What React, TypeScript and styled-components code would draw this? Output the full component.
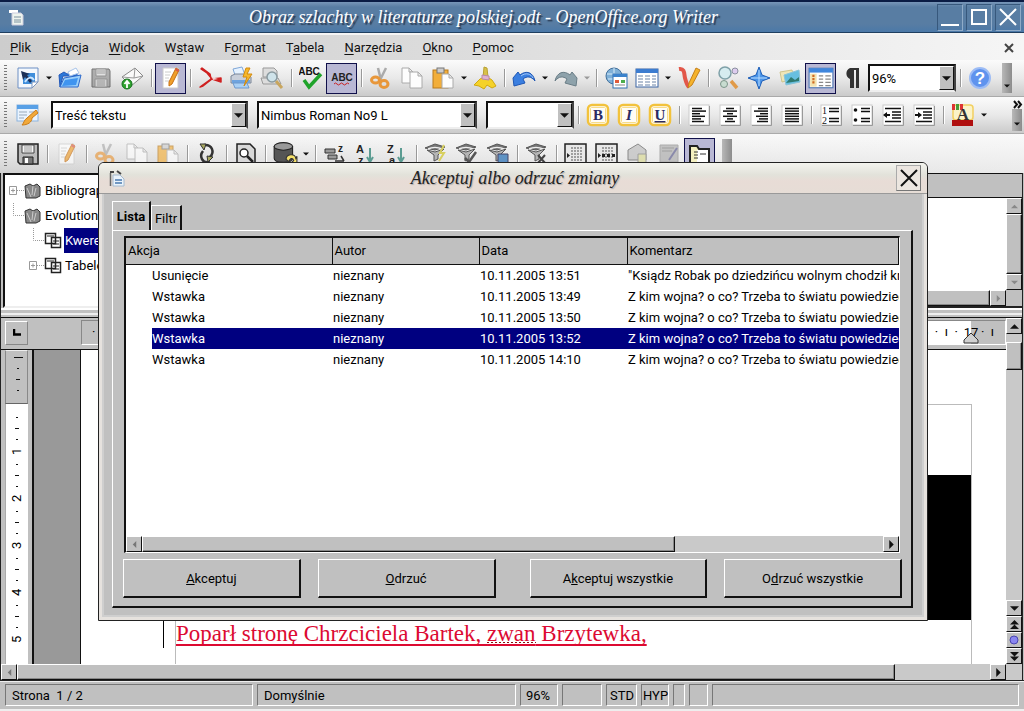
import React from "react";
import styled, { createGlobalStyle, css } from "styled-components";

const face = "#c0c0c0";
const ui = `Roboto, "Liberation Sans", sans-serif`;
const script = `"Liberation Serif", serif`;

const raised = css`
  border: 1px solid;
  border-color: #fff #111 #111 #fff;
`;

const Global = createGlobalStyle`
  * { box-sizing: border-box; }
  html, body { margin: 0; background: ${face}; }
  body { font-family: ${ui}; font-size: 13px; color: #000; overflow: hidden; }
  button, select { font: inherit; color: inherit; }
  svg { display: block; }
`;

const Window = styled.div`
  position: relative;
  display: flex;
  flex-direction: column;
  min-height: 100vh;
  background: ${face};
`;

/* ---------- title bar ---------- */
const TitleBar = styled.header`
  display: flex;
  align-items: center;
  height: 33px;
  padding: 0 3px 0 8px;
  border-top: 2px solid #0a1c44;
  border-bottom: 1px solid #1f3f60;
  background: linear-gradient(#7896b8 0, #587da3 5px, #587da3 22px, #4b79a8 100%);
`;
const WindowTitle = styled.h1`
  flex: 1;
  margin: 0;
  padding-left: 6px;
  text-align: center;
  font: italic 18px/30px ${script};
  color: #fff;
  text-shadow: 2px 2px 1px #2a3c55;
  white-space: nowrap;
`;
const WindowButtons = styled.div`
  display: flex;
  gap: 3px;
`;
const WindowButton = styled.button`
  display: grid;
  place-items: center;
  width: 26px;
  height: 27px;
  padding: 0;
  background: transparent;
  border: 1px solid;
  border-color: #37587c #8fabc8 #8fabc8 #37587c;
`;

/* ---------- menu ---------- */
const MenuBar = styled.nav`
  display: flex;
  align-items: center;
  gap: 20px;
  height: 27px;
  padding: 0 10px 0 10px;
  border-top: 2px solid #f4f4f4;
  background: linear-gradient(90deg, #cdcdcd, #dedede 50%, #f6f6f6);
`;
const MenuItem = styled.a`
  color: #111;
  text-decoration: none;
  line-height: 24px;
  u { text-underline-offset: 2px; }
`;
const CloseDoc = styled.button`
  margin-left: auto;
  padding: 0;
  border: 0;
  background: none;
`;

/* ---------- toolbars ---------- */
const Toolbar = styled.div<{ $last?: boolean }>`
  display: flex;
  align-items: center;
  height: ${(p) => (p.$last ? 39 : 37)}px;
  border-bottom: ${(p) => (p.$last ? 0 : 1)}px solid #aaa;
  background: ${(p) =>
    p.$last
      ? "linear-gradient(90deg, rgba(200,200,200,0) , rgba(250,250,250,.6)), linear-gradient(#f8f8f8, #d2d2d2)"
      : "linear-gradient(#fbfbfb, #e9e9e9 50%, #cbcbcb)"};
`;
const Grip = styled.span`
  width: 3px;
  height: 26px;
  margin: 0 5px 0 4px;
  background: repeating-linear-gradient(#777 0 1px, transparent 1px 3px);
`;
const Tool = styled.button<{ $on?: boolean; $dim?: boolean }>`
  display: grid;
  place-items: center;
  flex: none;
  width: 31px;
  height: 31px;
  padding: 0;
  border: ${(p) => (p.$on ? "1px solid #10104a" : "0")};
  background: ${(p) => (p.$on ? "#b9b8d4" : "transparent")};
  svg { opacity: ${(p) => (p.$dim ? 0.65 : 1)}; }
`;
const Drop = styled.button`
  display: grid;
  place-items: center;
  flex: none;
  width: 11px;
  height: 31px;
  padding: 0;
  border: 0;
  background: none;
`;
const Sep = styled.span`
  flex: none;
  width: 8px;
  height: 18px;
  background: linear-gradient(90deg, transparent 4px, #999 4px 5px, #fff 5px 6px, transparent 6px);
`;
const Combo = styled.span<{ $w: number; $gap: number }>`
  position: relative;
  flex: none;
  width: ${(p) => p.$w}px;
  height: 28px;
  margin-left: ${(p) => p.$gap}px;
  select {
    appearance: none;
    width: 100%;
    height: 100%;
    padding: 0 18px 0 2px;
    border: 2px solid;
    border-color: #111 #444 #eee #111;
    border-radius: 0;
    background: #fff;
  }
`;
const ComboArrow = styled.span`
  position: absolute;
  top: 2px;
  right: 2px;
  bottom: 2px;
  width: 15px;
  display: grid;
  place-items: center;
  pointer-events: none;
  background: ${face};
  ${raised}
`;
const Overflow = styled.button<{ $push?: boolean; $h?: number }>`
  display: flex;
  flex-direction: column;
  justify-content: flex-end;
  align-items: center;
  flex: none;
  width: 10px;
  height: ${(p) => p.$h ?? 30}px;
  margin-left: ${(p) => (p.$push ? "auto" : "7px")};
  margin-right: 2px;
  padding: 0 0 4px;
  border: 0;
  background: linear-gradient(90deg, #b8b8b8, #8c8c8c);
`;
const OverflowStack = styled.span`
  display: flex;
  flex-direction: column;
  align-items: center;
  margin-left: auto;
`;

/* ---------- data source browser ---------- */
const Frame = styled.main`
  display: flex;
  flex-direction: column;
  flex: 1;
  margin-right: 1px;
  border: solid #222;
  border-width: 0 1px;
`;
const Browser = styled.section`
  display: flex;
  height: 135px;
  padding-left: 2px;
`;
const Tree = styled.ul`
  width: 210px;
  margin: 0;
  padding: 3px 0 0 3px;
  list-style: none;
  background: #fff;
  border: 2px solid #111;
  border-bottom-color: #eee;
`;
const TreeRow = styled.li<{ $level: number; $selected?: boolean }>`
  display: flex;
  align-items: center;
  height: 25px;
  padding-left: ${(p) => p.$level * 20}px;
  span {
    margin-left: 2px;
    padding: 0 1px;
    line-height: 25px;
    ${(p) => p.$selected && "background:#000080;color:#fff;"}
  }
`;
const GridPane = styled.div`
  display: grid;
  flex: 1;
  grid-template: 24px 1fr 16px / 1fr 16px;
  border-top: 1px solid #111;
  border-bottom: 2px solid #222;
`;
const GridHead = styled.div`
  grid-column: 1 / 3;
  border-bottom: 1px solid #111;
`;
const GridBody = styled.div`
  background: #fff;
`;
const Splitter = styled.div`
  height: 10px;
  background: linear-gradient(#fff 2px, ${face} 2px 5px, #eee 5px 7px, ${face} 7px);
  border-bottom: 1px solid #111;
`;

/* ---------- scroll bars ---------- */
const Bar = styled.div<{ $v?: boolean }>`
  display: flex;
  flex-direction: ${(p) => (p.$v ? "column" : "row")};
  background: #c9c9c9;
  ${(p) => (p.$v ? "width:16px;" : "height:16px;")}
`;
const BarButton = styled.button`
  display: grid;
  place-items: center;
  flex: none;
  width: 16px;
  height: 16px;
  padding: 0;
  background: ${face};
  ${raised}
`;
const Thumb = styled.span<{ $size?: string }>`
  flex: ${(p) => (p.$size ? `0 0 ${p.$size}` : "1")};
  background: ${face};
  ${raised}
  box-shadow: inset -1px -1px 0 #888;
`;
const Track = styled.span<{ $size?: number }>`
  flex: ${(p) => (p.$size ? `0 0 ${p.$size}px` : "1")};
`;

/* ---------- editor ---------- */
const Editor = styled.section`
  display: flex;
  flex: 1;
`;
const EditorMain = styled.div`
  display: flex;
  flex-direction: column;
  flex: 1;
`;
const RulerRow = styled.div`
  display: flex;
  align-items: center;
  height: 32px;
  padding: 0 0 2px 4px;
  border-bottom: 1px solid #111;
`;
const TabKind = styled.button`
  display: grid;
  place-items: center;
  width: 23px;
  height: 24px;
  padding: 0;
  margin-right: 53px;
  background: ${face};
  border: 1px solid;
  border-color: #fff #888 #888 #fff;
`;
const Ruler = styled.div`
  display: flex;
  flex: 1;
  height: 25px;
  border: 1px solid;
  border-color: #888 #fff #fff #888;
`;
const RulerMargin = styled.span<{ $w: number }>`
  width: ${(p) => p.$w}px;
  padding: 2px 0 0 10px;
  line-height: 18px;
  white-space: pre;
`;
const RulerScale = styled.span`
  position: relative;
  flex: 1;
  padding-right: 10px;
  background: #fff;
  text-align: right;
  line-height: 22px;
  white-space: pre;
`;
const Indent = styled.span`
  position: absolute;
  right: -9px;
  bottom: 0;
`;
const DocRow = styled.div`
  display: flex;
  flex: 1;
`;
const VRuler = styled.div`
  flex: none;
  width: 33px;
  padding-left: 4px;
  border-right: 2px solid #111;
`;
const VMargin = styled.div`
  height: 54px;
  width: 23px;
  border: 1px solid;
  border-color: #eee #888 #666 #888;
`;
const VScale = styled.div`
  width: 23px;
  background: #fff;
  border-left: 1px solid #aaa;
`;
const Backdrop = styled.div`
  flex: none;
  width: 47px;
  background: #999;
  border-right: 1px solid #111;
`;
const Page = styled.div`
  flex: 1;
  padding: 54px 34px 0 94px;
  background: #fff;
`;
const PageBody = styled.div`
  height: 100%;
  padding-top: 70px;
  border: solid #bbb;
  border-width: 1px 1px 0;
`;
const Figure = styled.div`
  width: 50%;
  height: 145px;
  margin-left: auto;
  background: #000;
`;
const Paragraph = styled.p`
  position: relative;
  margin: 0;
  font: 23px/27px "Liberation Serif", serif;
  color: #dc0a32;
  white-space: nowrap;
  ins {
    text-decoration: underline 2px;
    text-underline-offset: 3px;
    text-decoration-skip-ink: none;
  }
  em {
    font-style: normal;
    background: repeating-linear-gradient(90deg, #8a1010 0 2px, transparent 2px 4px) 0 21px / 100% 1px no-repeat;
  }
  &::before {
    content: "";
    position: absolute;
    left: -13px;
    top: -6px;
    height: 34px;
    border-left: 1px solid #000;
  }
`;

/* ---------- status bar ---------- */
const StatusBar = styled.footer`
  display: flex;
  gap: 4px;
  height: 31px;
  padding: 3px 5px 3px 5px;
  border-top: 1px solid #222;
  border-bottom: 2px solid #eee;
  background: linear-gradient(#eee 1px, ${face} 1px);
`;
const StatusCell = styled.span<{ $w?: number; $pad?: number }>`
  flex: ${(p) => (p.$w ? `0 0 ${p.$w}px` : "1")};
  padding-left: ${(p) => p.$pad ?? 6}px;
  line-height: 22px;
  white-space: pre;
  overflow: hidden;
  border: 1px solid;
  border-color: #777 #fff #fff #777;
`;

/* ---------- dialog ---------- */
const Dialog = styled.div`
  position: absolute;
  top: 162px;
  left: 98px;
  right: 96px;
  background: ${face};
  border: 1px solid #222;
  border-radius: 6px 6px 0 0;
  box-shadow: inset 0 0 0 3px #e6e2de, inset 0 0 0 5px #cfcfcf;
`;
const DialogTitle = styled.div`
  display: flex;
  align-items: center;
  height: 31px;
  padding: 0 6px 0 9px;
  border-bottom: 1px solid #999;
  border-radius: 5px 5px 0 0;
  background: linear-gradient(#f4f4ee, #e2e2da 40%, #e8dcd6 60%, #e6ddd6);
  h2 {
    flex: 1;
    margin: 0;
    padding-left: 8px;
    text-align: center;
    font: italic 18px/30px ${script};
    color: #222;
    text-shadow: 1px 1px 1px #aaa;
  }
`;
const DialogClose = styled.button`
  display: grid;
  place-items: center;
  width: 25px;
  height: 26px;
  padding: 0;
  background: #ece6e0;
  border: 1px solid;
  border-color: #aaa #777 #777 #aaa;
`;
const DialogBody = styled.div`
  padding: 9px 14px 12px 13px;
`;
const Tabs = styled.div`
  display: flex;
  align-items: flex-end;
  height: 27px;
`;
const Tab = styled.button<{ $active?: boolean }>`
  height: ${(p) => (p.$active ? 29 : 25)}px;
  width: ${(p) => (p.$active ? 39 : 31)}px;
  padding: 0;
  border: solid;
  border-width: 1px 2px 0 1px;
  border-color: #fff #111 #fff #fff;
  background: ${face};
  font-weight: ${(p) => (p.$active ? 700 : 400)};
`;
const TabPanel = styled.div`
  padding: 5px 9px 8px 10px;
  border: solid;
  border-width: 1px 2px 2px 1px;
  border-color: #fff #111 #111 #fff;
`;
const List = styled.div`
  margin: 0 2px 6px 1px;
  border: solid;
  border-width: 2px 1px 1px 2px;
  border-color: #111 #fff #fff #111;
  background: #fff;
`;
const ListView = styled.div`
  height: 298px;
  overflow: hidden;
`;
const Changes = styled.table`
  width: 100%;
  table-layout: fixed;
  border-collapse: collapse;
  th, td { padding: 0 0 0 1px; text-align: left; white-space: nowrap; overflow: hidden; }
  th {
    height: 26px;
    padding-left: 2px;
    font-weight: 400;
    background: ${face};
    border-right: 1px solid #111;
    border-bottom: 1px solid #111;
  }
  td { height: 21px; line-height: 21px; }
  td:first-child { padding-left: 26px; }
`;
const ChangeRow = styled.tr<{ $selected?: boolean }>`
  ${(p) =>
    p.$selected &&
    css`
      color: #fff;
      td { background: #000080; }
      td:first-child { background: linear-gradient(90deg, #fff 26px, #000080 26px); }
    `}
`;
const Actions = styled.div`
  display: flex;
  gap: 34px;
`;
const ActionPair = styled.div`
  display: flex;
  flex: 1;
  gap: 17px;
`;
const Action = styled.button`
  flex: 1;
  height: 39px;
  padding: 0;
  background: ${face};
  border: solid;
  border-width: 1px 2px 2px 1px;
  border-color: #fff #111 #111 #fff;
`;

/* ---------- drawings ---------- */
const Arrow = ({ d = "down", c = "#111", s = 7 }: { d?: string; c?: string; s?: number }) => {
  const p: Record<string, string> = {
    down: "M0 2h8L4 6z",
    up: "M0 6h8L4 2z",
    left: "M6 0v8L2 4z",
    right: "M2 0v8l4-4z",
    up2: "M0 4h8L4 0zM0 8h8L4 4z",
    down2: "M0 0h8L4 4zM0 4h8L4 8z",
  };
  return (
    <svg width={s} height={s} viewBox="0 0 8 8"><path d={p[d]} fill={c} /></svg>
  );
};

const Svg = ({ children, w = 24, h = 24 }: { children: React.ReactNode; w?: number; h?: number }) => (
  <svg width={w} height={h} viewBox="0 0 24 24" fill="none">{children}</svg>
);

const sheet = (x: number, y: number, w = 11, h = 15, fill = "#fdfdfd") => (
  <path d={`M${x} ${y}h${w - 4}l4 4v${h - 4}h-${w}zM${x + w - 4} ${y}v4h4`} fill={fill} stroke="#aaa" />
);
const lens = (x: number, y: number, c = "#d89a50") => (
  <>
    <path d={`M${x + 4} ${y + 4}l6 7`} stroke={c} strokeWidth="3" />
    <circle cx={x} cy={y} r="5" fill="#cfe3ea" stroke="#8a9aa0" strokeWidth="1.5" />
  </>
);
const funnel = (extra?: React.ReactNode) => (
  <Svg>
    <path d="M1 6l10-4 10 3-10 3z" fill="#777" stroke="#555" />
    <path d="M4 7c4-2 10-2 14 0" stroke="#eee" strokeWidth="1.5" />
    <path d="M3 8l7 5v6l4-2v-4l6-6-9 3z" fill="#b5b5b5" stroke="#555" />
    {extra}
  </Svg>
);
const lines = (xs: number[][]) => (
  <Svg>
    <rect x="2" y="2" width="20" height="20" fill="#fff" stroke="#ccc" />
    <path d="M22.500 3v19.500H3" stroke="#999" />
    {xs.map(([a, b], i) => (
      <path key={i} d={`M${a} ${5.5 + i * 2.6}H${b}`} stroke="#111" strokeWidth="1.5" />
    ))}
  </Svg>
);
const letterBox = (t: string, st: React.CSSProperties) => (
  <Svg>
    <rect x="2" y="2" width="20" height="20" rx="4" fill="#fff" stroke="#f2c23c" strokeWidth="2.500" />
    <rect x="4.500" y="4.500" width="15" height="15" rx="1" fill="#fffdf6" stroke="#f7dc8a" />
    <text x="12" y="17" textAnchor="middle" fontFamily="Liberation Serif" fontSize="15" fontWeight="700" fill="#2a2a62" style={st}>{t}</text>
  </Svg>
);
const sortIcon = (a: string, b: string) => (
  <Svg>
    <text x="2" y="11" fontFamily={"Liberation Sans"} fontWeight="700" fontSize="11" fill="#222">{a}</text>
    <text x="4" y="22" fontFamily={"Liberation Sans"} fontWeight="700" fontSize="11" fill="#222">{b}</text>
    <path d="M16 6v13M13 15l3 5 3-5" stroke="#5b9c92" strokeWidth="2" />
  </Svg>
);
const bookRows = (mark: React.ReactNode) => (
  <Svg>
    <rect x="1" y="2" width="21" height="20" fill="#e8e8e8" stroke="#222" strokeWidth="1.500" />
    <path d="M7 6h12M7 9h12M7 12h12M7 15h12M7 18h12" stroke="#555" strokeDasharray="2 1" />
    {mark}
  </Svg>
);

const icons = {
  newDoc: (
    <Svg>
      <path d="M2 2h20v14l-6 6H2z" fill="#f4f8fd" stroke="#6d8fc4" />
      <path d="M7 7h12v11H7z" fill="#3f8edb" />
      <path d="M5 5l9 3-3 1 5 6-2 2-5-6-2 3z" fill="#1b2f58" />
      <path d="M9 16c4-6 7-5 9-2" stroke="#cde6ff" strokeWidth="2" />
      <path d="M22 16h-6v6z" fill="#fff" stroke="#7d96bd" />
    </Svg>
  ),
  open: (
    <Svg>
      <path d="M1 9l5-3 3 2 10-1v3H5l-3 11z" fill="#2c78d8" stroke="#2459b8" />
      <path d="M10 6l8-4 3 5-9 3z" fill="#fff" stroke="#a8c4ea" />
      <path d="M6 12l17-3-3 12H2z" fill="#9bd0fb" stroke="#2a68cc" />
      <path d="M4 20l3-6 13-2-2 7z" fill="#3f94f0" />
    </Svg>
  ),
  save: (
    <Svg>
      <path d="M3 3h17l1 2v16H3z" fill="#8c8c8c" stroke="#333" />
      <path d="M7 3h10v7H7z" fill="#ddd" stroke="#666" />
      <path d="M6 13h12v8H6z" fill="#c8c8c8" stroke="#666" />
      <path d="M8 15h8M8 17h8M8 19h8M8 5h8M8 7h8" stroke="#777" />
    </Svg>
  ),
  mail: (
    <Svg>
      <path d="M2 11L15 2l8 8-12 10z" fill="#fafafa" stroke="#888" />
      <path d="M2 11l12 1 1-10M14 12l9-2" stroke="#999" fill="none" />
      <circle cx="7" cy="18" r="5" fill="#2fa32f" stroke="#12701a" />
      <path d="M7 22v-6M4.500 18L7 15l2.500 3" stroke="#fff" strokeWidth="1.800" />
    </Svg>
  ),
  edit: (
    <Svg>
      <path d="M4 2h15v20H4z" fill="#fff" stroke="#ccc" />
      <path d="M6 6h6M6 9h5M6 12h4M6 15h4" stroke="#ccc" />
      <path d="M17 2l3 2-7 14-3 2v-4z" fill="#f0a02c" stroke="#c76f12" />
      <path d="M17 2l3 2-1 2-3-2z" fill="#d8584a" />
    </Svg>
  ),
  pdf: (
    <Svg>
      <path d="M4 2l8 6 1 5-11 8 3-1 9-7 9-1v4l-9-3-5-6-6-4z" fill="#cf2020" stroke="#cf2020" strokeWidth="1.500" strokeLinejoin="round" />
      <path d="M14 11l6 2-5 1z" fill="#f3d0d0" />
    </Svg>
  ),
  print: (
    <Svg>
      <path d="M4 3l9-2 3 8H6z" fill="#e6f2ff" stroke="#7fa7d8" />
      <path d="M2 10l4-2h13l3 3v6H2z" fill="#c9cfda" stroke="#7b8698" />
      <path d="M3 14h18v3H3z" fill="#6ea4e0" />
      <path d="M4 17h14l2 5H6z" fill="#a9d0f5" stroke="#6d98cc" />
      <path d="M17 2l-3 9h4l-3 9 8-12h-5l3-6z" fill="#f7b82a" stroke="#d28a10" />
    </Svg>
  ),
  preview: (
    <Svg>
      <path d="M3 2h11l3 3v6H3zM1 12h17l3 6H3z" fill="#ddd" stroke="#999" />
      {lens(12, 11, "#c9a65e")}
    </Svg>
  ),
  spell: (
    <Svg>
      <text x="10" y="9" textAnchor="middle" fontFamily="Liberation Sans" fontWeight="700" fontSize="10" fill="#111">ABC</text>
      <path d="M5 14l5 7L22 8" stroke="#1fa32a" strokeWidth="3.500" />
    </Svg>
  ),
  autospell: (
    <Svg>
      <text x="12" y="15" textAnchor="middle" fontFamily="Liberation Sans" fontWeight="700" fontSize="10" fill="#222">ABC</text>
      <path d="M4 18q1.500-2 3 0t3 0 3 0 3 0 3 0" stroke="#c22" />
    </Svg>
  ),
  cut: (
    <Svg>
      <path d="M9 2l3 12M17 2l-6 12" stroke="#aaa" strokeWidth="2.500" />
      <ellipse cx="6.500" cy="14" rx="4" ry="3" stroke="#e8973a" strokeWidth="3" />
      <ellipse cx="15" cy="18" rx="4" ry="3.500" stroke="#e8973a" strokeWidth="3" />
    </Svg>
  ),
  copy: <Svg>{sheet(2, 2, 11, 15)}{sheet(10, 6, 12, 16)}</Svg>,
  paste: (
    <Svg>
      <rect x="2" y="4" width="15" height="18" fill="#f2ae3a" stroke="#b97a1c" />
      <rect x="6" y="2" width="7" height="5" fill="#ccc" stroke="#777" />
      {sheet(11, 8, 11, 14)}
    </Svg>
  ),
  brush: (
    <Svg>
      <path d="M11 1l3 1 1 9-5 1z" fill="#d8c04a" stroke="#b9a232" />
      <path d="M7 13l6-3 6 4 4 6-4 2-5-3-3 4-5-3-5-1z" fill="#f5d22a" stroke="#d0a810" />
      <path d="M9 9l7 1v4l-7-1z" fill="#dfb3cf" stroke="#b98aa8" />
    </Svg>
  ),
  undo: (
    <Svg>
      <path d="M1 12l5-6 2 3c6-5 13-3 15 6-4-5-8-5-12-2l2 4-11 3z" fill="#3b7fe0" stroke="#1f57b4" />
      <path d="M9 10c5-4 10-2 12 2" stroke="#a5c8f6" />
    </Svg>
  ),
  redo: (
    <Svg>
      <path d="M23 12l-5-6-2 3C10 4 3 6 1 15c4-5 8-5 12-2l-2 4 11 3z" fill="#8ea2ab" stroke="#6a7d86" />
    </Svg>
  ),
  link: (
    <Svg>
      <circle cx="10" cy="10" r="8" fill="#7fb0d8" stroke="#44719c" />
      <path d="M3 8h14M4 13h12M10 2v16" stroke="#d9edfa" />
      <rect x="9" y="8" width="14" height="14" fill="#fff" stroke="#2f6fb0" />
      <path d="M9 8h14v3H9z" fill="#3b82cc" />
      <path d="M11 14h4v3h-4z" fill="#e05a3a" /><path d="M17 14h4v3h-4z" fill="#4cae4c" />
      <path d="M11 19h10" stroke="#888" />
    </Svg>
  ),
  table: (
    <Svg>
      <rect x="1" y="3" width="22" height="18" fill="#fff" stroke="#3b64a4" />
      <path d="M1 3h22v4H1z" fill="#3c7cd0" />
      <path d="M3 10h5M10 10h5M17 10h4M3 13h5M10 13h5M17 13h4M3 16h5M10 16h5M17 16h4M3 19h5M10 19h5M17 19h4" stroke="#6b83a6" />
    </Svg>
  ),
  draw: (
    <Svg>
      <path d="M2 3c6-1 5 5 6 9s2 7 4 9" stroke="#e2574a" strokeWidth="4" />
      <path d="M19 2l4 2-8 15-4 3 1-5z" fill="#f5b32c" stroke="#c5801a" />
    </Svg>
  ),
  find: (
    <Svg>
      <path d="M15 15l6 7" stroke="#e09a48" strokeWidth="3.500" />
      <circle cx="9" cy="7" r="6" fill="#d6ecf0" stroke="#7fa1a8" strokeWidth="1.500" />
      <circle cx="19" cy="5" r="3" fill="#dce" stroke="#8a90a0" />
      <circle cx="8" cy="18" r="3.500" fill="#c8dcd0" stroke="#7c958a" />
    </Svg>
  ),
  nav: (
    <Svg>
      <path d="M12 1l3 8 8 3-8 3-3 8-3-8-8-3 8-3z" fill="#4a94e8" stroke="#1f5fb8" />
      <path d="M12 4v16M4 12h16" stroke="#b8dcff" />
    </Svg>
  ),
  gallery: (
    <Svg>
      <path d="M2 6l12-2 2 9-12 3z" fill="#efe6b8" stroke="#d0c58c" />
      <path d="M6 9l15-5 1 12-14 3z" fill="#67bfe0" stroke="#8cc4d8" />
      <path d="M8 17l5-6 4 3 4-3v4z" fill="#2f7a70" />
    </Svg>
  ),
  sources: (
    <Svg w={26} h={26}>
      <rect x="1" y="3" width="22" height="18" fill="#fff" stroke="#4a74b0" />
      <path d="M1 3h22v4H1z" fill="#3f86dc" />
      <path d="M2 8h6v12H2z" fill="#f3e3b0" />
      <path d="M4 10h2M4 13h2M4 16h2" stroke="#d06a20" strokeWidth="2" />
      <path d="M10 10h4M16 10h5M10 13h4M16 13h5M10 16h4M16 16h5M10 19h4M16 19h5" stroke="#888" />
    </Svg>
  ),
  para: (
    <Svg>
      <path d="M10 13a6 6 0 010-11h9v20h-3V4h-2v18h-4z" fill="#333" />
    </Svg>
  ),
  help: (
    <Svg>
      <circle cx="12" cy="12" r="10" fill="#5f93ee" stroke="#9dbcf5" strokeWidth="2" />
      <text x="12" y="18" textAnchor="middle" fontFamily="Liberation Sans" fontWeight="700" fontSize="17" fill="#fff">?</text>
    </Svg>
  ),
  styles: (
    <Svg>
      <rect x="1" y="2" width="21" height="16" fill="#eaf4ff" stroke="#8cb3dd" />
      <path d="M1 2h21v4H1z" fill="#58a0e6" />
      <path d="M3 9h8M3 12h8M3 15h5M13 9h7" stroke="#9ab" />
      <path d="M20 7l2 3-6 5c0 4-4 7-10 7 2-2 2-5 5-7z" fill="#f2a93a" stroke="#cb7c18" />
    </Svg>
  ),
  left: lines([[5, 15], [5, 19], [5, 13], [5, 18], [5, 14], [5, 17]]),
  center: lines([[8, 16], [5, 19], [9, 15], [5, 19], [9, 15], [7, 17]]),
  right: lines([[9, 19], [5, 19], [11, 19], [7, 19], [10, 19], [8, 19]]),
  justify: lines([[5, 19], [5, 19], [5, 19], [5, 19], [5, 19], [5, 19]]),
  numbers: (
    <Svg>
      <rect x="2" y="2" width="20" height="20" fill="#fff" stroke="#ccc" />
      <path d="M22.500 3v19.500H3" stroke="#999" />
      <text x="3" y="11" fontFamily="Liberation Serif" fontSize="10" fill="#111">1</text>
      <text x="3" y="21" fontFamily="Liberation Serif" fontSize="10" fill="#111">2</text>
      <path d="M10 5.500h10M10 8.500h10M10 15.500h10M10 18.500h10" stroke="#111" strokeWidth="1.500" />
    </Svg>
  ),
  bullets: (
    <Svg>
      <rect x="2" y="2" width="20" height="20" fill="#fff" stroke="#ccc" />
      <path d="M22.500 3v19.500H3" stroke="#999" />
      <circle cx="5.500" cy="7" r="1.800" fill="#111" /><circle cx="5.500" cy="17" r="1.800" fill="#111" />
      <path d="M11 5.500h9M11 8.500h9M11 15.500h9M11 18.500h9" stroke="#111" strokeWidth="1.500" />
    </Svg>
  ),
  outdent: (
    <Svg>
      <rect x="2" y="2" width="20" height="20" fill="#fff" stroke="#ccc" />
      <path d="M22.500 3v19.500H3" stroke="#999" />
      <path d="M4 5.500h16M11 9h9M11 12h9M11 15h9M4 18.500h16" stroke="#111" strokeWidth="1.500" />
      <path d="M2 12l4-3v2h3v2H6v2z" fill="#111" />
    </Svg>
  ),
  indent: (
    <Svg>
      <rect x="2" y="2" width="20" height="20" fill="#fff" stroke="#ccc" />
      <path d="M22.500 3v19.500H3" stroke="#999" />
      <path d="M4 5.500h16M11 9h9M11 12h9M11 15h9M4 18.500h16" stroke="#111" strokeWidth="1.500" />
      <path d="M10 12L6 9v2H3v2h3v2z" fill="#111" />
    </Svg>
  ),
  fontColor: (
    <Svg>
      <rect x="2" y="2" width="20" height="15" rx="3" fill="#fbf3c8" stroke="#f2d060" strokeWidth="1.500" />
      <path d="M1 1h3v6H1zM9 1h3v6H9z" fill="#d33" /><path d="M5 1h3v6H5z" fill="#4a9a3a" />
      <text x="12" y="17" textAnchor="middle" fontFamily="Liberation Serif" fontWeight="700" fontSize="17" fill="#333">A</text>
      <path d="M1 17h21v6H1z" fill="#b01010" />
    </Svg>
  ),
  floppy: (
    <Svg>
      <path d="M2 2h20v20H4l-2-2z" fill="#bbb" stroke="#222" strokeWidth="1.500" />
      <path d="M6 3h12v8H6z" fill="#f4f4f4" stroke="#444" /><path d="M8 5h8M8 7h8M8 9h8" stroke="#999" />
      <path d="M7 15h10v7H7z" fill="#777" stroke="#222" /><path d="M9 16h3v5H9z" fill="#fff" />
    </Svg>
  ),
  refresh: (
    <Svg>
      <path d="M9 3c8-1 11 7 6 12M15 20C7 22 4 14 8 9" stroke="#333" strokeWidth="2.500" />
      <path d="M5 2l6 0-2 6zM12 14l6 1-5 5z" fill="#a8a860" stroke="#333" />
    </Svg>
  ),
  findRec: (
    <Svg>
      <path d="M3 2h13l5 5v15H3z" fill="#d8d8d8" stroke="#222" strokeWidth="1.500" />
      <circle cx="10" cy="11" r="4" fill="#fff" stroke="#222" strokeWidth="1.500" />
      <path d="M13 14l6 6" stroke="#222" strokeWidth="2.500" />
    </Svg>
  ),
  dbRefresh: (
    <Svg w={26} h={26}>
      <path d="M2 5v11c0 5 17 5 17 0V5z" fill="#555" stroke="#222" />
      <ellipse cx="10.500" cy="5" rx="8.500" ry="3.500" fill="#999" stroke="#222" />
      <path d="M13 17c0-5 8-6 9-1l1-2v6h-5l2-2c-1-3-4-2-4 1z" fill="#f4e06a" stroke="#333" />
    </Svg>
  ),
  sort: (
    <Svg>
      <path d="M2 7h10v4H2zM5 13h9v4H5z" fill="#999" stroke="#333" />
      <text x="15" y="10" fontFamily="Liberation Sans" fontWeight="700" fontSize="10" fill="#222">z</text>
      <path d="M12 19h9M18 14l3 5" stroke="#333" strokeWidth="1.500" />
    </Svg>
  ),
  sortAsc: sortIcon("A", "z"),
  sortDesc: sortIcon("Z", "a"),
  autofilter: funnel(<path d="M20 3l-4 8h4l-5 8" stroke="#d8d060" strokeWidth="2" />),
  applyFilter: funnel(<path d="M10 16l4 4 7-10" stroke="#555" strokeWidth="2.500" />),
  stdFilter: funnel(<path d="M12 12h10v9H12z" fill="#5f93c4" stroke="#446" />),
  noFilter: funnel(<path d="M13 13l7 8M20 13l-7 8" stroke="#444" strokeWidth="2" />),
  toText: bookRows(<path d="M3 11l3 2.500-3 2.500z" fill="#222" />),
  toFields: bookRows(<path d="M3 11l3 2.500-3 2.500zM7 12h3v3H7zM12 12h3v3h-3zM17 12h3v3h-3z" fill="#222" />),
  mailMerge: (
    <Svg>
      <path d="M2 8l10-6 8 6v10H2z" fill="#bbb" stroke="#555" /><path d="M12 12h8v9h-8z" fill="#d8d890" stroke="#777" />
    </Svg>
  ),
  docData: (
    <Svg>
      <path d="M3 3h18v17H3z" fill="#aaa" stroke="#888" /><path d="M5 6h12M5 9h10" stroke="#777" /><path d="M20 6l-8 12" stroke="#558" strokeWidth="2" />
    </Svg>
  ),
  explorer: (
    <Svg>
      <path d="M2 4h7l2 3h10v16H2z" fill="#f4f0c0" stroke="#222" strokeWidth="2" />
      <path d="M9 8h11v14H9z" fill="#fff" /><path d="M6 10h4M6 13h4M6 16h4M12 12h6" stroke="#333" />
    </Svg>
  ),
  appDoc: (
    <svg width="16" height="18" viewBox="0 0 16 18">
      <path d="M1 2h9v3H1z" fill="#fff" /><path d="M4 5h9l2 2v10H4z" fill="#eef4ee" stroke="#ccd" /><path d="M6 9h7M6 12h7M6 14h7" stroke="#7d92a0" />
    </svg>
  ),
  dialogDoc: (
    <svg width="18" height="19" viewBox="0 0 18 19" fill="none">
      <path d="M2.500 4v13" stroke="#666" strokeWidth="1.500" /><path d="M2 3h4M9 2l4 3" stroke="#444" strokeWidth="2" /><path d="M5 6h7l4 4v7H5z" fill="#eaf3fb" stroke="#a5bacf" /><path d="M7 11h7M7 14h7" stroke="#4a7ab0" strokeWidth="1.500" />
    </svg>
  ),
};
type IconName = keyof typeof icons;

const T = ({ i, label, on, dim }: { i: IconName; label: string; on?: boolean; dim?: boolean }) => (
  <Tool $on={on} $dim={dim} aria-label={label} aria-pressed={on}>{icons[i]}</Tool>
);
const D = ({ c }: { c?: string }) => <Drop aria-label="Więcej"><Arrow c={c} s={6} /></Drop>;
const Select = ({ label, value, w, gap }: { label: string; value: string; w: number; gap: number }) => (
  <Combo $w={w} $gap={gap}>
    <select aria-label={label} defaultValue={value}><option>{value}</option></select>
    <ComboArrow><Arrow s={9} /></ComboArrow>
  </Combo>
);

const menus: [string, string, string][] = [
  ["", "P", "lik"], ["", "E", "dycja"], ["", "W", "idok"], ["W", "s", "taw"], ["F", "o", "rmat"],
  ["T", "a", "bela"], ["", "N", "arzędzia"], ["", "O", "kno"], ["", "P", "omoc"],
];
const quote = "Z kim wojna? o co? Trzeba to światu powiedzieć";
const changes = [
  ["Usunięcie", "10.11.2005 13:51", "\"Ksiądz Robak po dziedzińcu wolnym chodził krokiem"],
  ["Wstawka", "10.11.2005 13:49", quote],
  ["Wstawka", "10.11.2005 13:50", quote],
  ["Wstawka", "10.11.2005 13:52", quote],
  ["Wstawka", "10.11.2005 14:10", quote],
];

const Plus = ({ faded }: { faded?: boolean }) => (
  <svg width="16" height="25" viewBox="0 0 16 25" fill="none" stroke="#999">
    {!faded && <path d="M1.500 8.500h7v8h-7zM3 12.500h4M5 10.500v4" />}
    <path d={faded ? "M5.500 0v12.500H16" : "M9 12.500h7"} strokeDasharray="1 1" />
  </svg>
);
const Book = () => (
  <svg width="18" height="16" viewBox="0 0 18 16">
    <path d="M1 3l5-2 3 2 4-2 3 3v9l-4 2H2z" fill="#888" stroke="#333" />
    <path d="M3 5l4 9M9 3l-1 9M12 5l-2 8" stroke="#ccc" />
  </svg>
);
const Sheets = () => (
  <svg width="18" height="17" viewBox="0 0 18 17" fill="#fff" stroke="#222">
    <path d="M1.500 1.500h10v10h-10zM7.500 5.500h9v10h-9z" strokeWidth="1.500" /><path d="M3 4h7M9 9h6M9 12h6" />
  </svg>
);

const VRulerMarks = () => (
  <svg width="22" height="260" viewBox="0 0 22 260">
    {[1, 2, 3, 4, 5].map((n) => (
      <g key={n}>
        <text transform={`translate(15 ${n * 47 + 4}) rotate(-90)`} fontFamily="Roboto" fontSize="13">{n}</text>
        {[-34, -23, -12].map((o) => (
          <path key={o} d={`M${o === -23 ? 9 : 10} ${n * 47 + o}.500h${o === -23 ? 4 : 2}`} stroke="#111" />
        ))}
      </g>
    ))}
  </svg>
);

export default function App() {
  return (
    <Window>
      <Global />
      <TitleBar>
        {icons.appDoc}
        <WindowTitle>Obraz szlachty w literaturze polskiej.odt - OpenOffice.org Writer</WindowTitle>
        <WindowButtons>
          <WindowButton aria-label="Minimalizuj"><svg width="20" height="20"><path d="M1 18h18" stroke="#fff" strokeWidth="2" /></svg></WindowButton>
          <WindowButton aria-label="Maksymalizuj"><svg width="20" height="20"><path d="M3 3h14v14H3z" stroke="#fff" strokeWidth="2" fill="none" /></svg></WindowButton>
          <WindowButton aria-label="Zamknij"><svg width="20" height="20"><path d="M2 2l16 16M18 2L2 18" stroke="#fff" strokeWidth="2" /></svg></WindowButton>
        </WindowButtons>
      </TitleBar>

      <MenuBar>
        {menus.map(([a, k, b]) => (
          <MenuItem key={a + k + b} href="#">{a}<u>{k}</u>{b}</MenuItem>
        ))}
        <CloseDoc aria-label="Zamknij dokument"><svg width="10" height="10"><path d="M1 1l8 8M9 1L1 9" stroke="#444" strokeWidth="2" /></svg></CloseDoc>
      </MenuBar>

      <Toolbar>
        <Grip />
        <T i="newDoc" label="Nowy" /><D />
        <T i="open" label="Otwórz" /><T i="save" label="Zapisz" dim /><T i="mail" label="Wyślij" /><Sep />
        <T i="edit" label="Edytuj plik" on /><Sep />
        <T i="pdf" label="Eksport PDF" /><T i="print" label="Drukuj" /><T i="preview" label="Podgląd" /><Sep />
        <T i="spell" label="Sprawdź pisownię" /><T i="autospell" label="Autokorekta" on /><Sep />
        <T i="cut" label="Wytnij" /><T i="copy" label="Kopiuj" /><T i="paste" label="Wklej" /><D />
        <T i="brush" label="Pędzel formatów" /><Sep />
        <T i="undo" label="Cofnij" /><D /><T i="redo" label="Przywróć" /><D c="#999" /><Sep />
        <T i="link" label="Hiperłącze" /><T i="table" label="Wstaw tabelę" /><D /><T i="draw" label="Rysunek" /><Sep />
        <T i="find" label="Znajdź" /><T i="nav" label="Nawigator" /><T i="gallery" label="Galeria" />
        <T i="sources" label="Źródła danych" on /><T i="para" label="Znaki niedrukowane" />
        <Select label="Skala" value="96%" w={88} gap={1} />
        <Sep /><T i="help" label="Pomoc" />
        <Overflow aria-label="Więcej narzędzi"><Arrow s={6} /></Overflow>
      </Toolbar>

      <Toolbar>
        <Grip />
        <T i="styles" label="Style" />
        <Select label="Styl" value="Treść tekstu" w={197} gap={8} />
        <Select label="Czcionka" value="Nimbus Roman No9 L" w={220} gap={9} />
        <Select label="Rozmiar" value="" w={88} gap={9} />
        <Sep />
        <Tool aria-label="Pogrubienie">{letterBox("B", {})}</Tool>
        <Tool aria-label="Kursywa">{letterBox("I", { fontStyle: "italic" })}</Tool>
        <Tool aria-label="Podkreślenie">{letterBox("U", { textDecoration: "underline" })}</Tool>
        <Sep />
        <T i="left" label="Do lewej" /><T i="center" label="Do środka" /><T i="right" label="Do prawej" /><T i="justify" label="Wyjustuj" /><Sep />
        <T i="numbers" label="Numerowanie" /><T i="bullets" label="Wypunktowanie" /><T i="outdent" label="Zmniejsz wcięcie" /><T i="indent" label="Zwiększ wcięcie" /><Sep />
        <T i="fontColor" label="Kolor czcionki" /><D />
        <OverflowStack>
          <svg width="10" height="9" fill="none" stroke="#111" strokeWidth="2"><path d="M1 1l3 3.500L1 8M5 1l3 3.500L5 8" /></svg>
          <Overflow aria-label="Więcej formatowania" $push $h={22}><Arrow s={6} /></Overflow>
        </OverflowStack>
      </Toolbar>

      <Toolbar $last>
        <Grip />
        <T i="floppy" label="Zapisz rekord" /><Sep /><T i="edit" label="Edytuj dane" dim /><Sep />
        <T i="cut" label="Wytnij rekord" dim /><T i="copy" label="Kopiuj rekord" dim /><T i="paste" label="Wklej rekord" dim /><Sep />
        <T i="refresh" label="Cofnij zmiany" /><Sep /><T i="findRec" label="Znajdź rekord" /><Sep />
        <T i="dbRefresh" label="Odśwież" /><D /><Sep />
        <T i="sort" label="Sortuj" /><T i="sortAsc" label="Rosnąco" /><T i="sortDesc" label="Malejąco" /><Sep />
        <T i="autofilter" label="Autofiltr" /><T i="applyFilter" label="Zastosuj filtr" /><T i="stdFilter" label="Filtr standardowy" /><Sep />
        <T i="noFilter" label="Usuń filtr" /><Sep />
        <T i="toText" label="Dane do tekstu" /><T i="toFields" label="Dane do pól" /><T i="mailMerge" label="List seryjny" dim /><T i="docData" label="Źródło dokumentu" dim />
        <T i="explorer" label="Eksplorator" on />
        <Overflow aria-label="Więcej danych" />
      </Toolbar>

      <Frame>
        <Browser>
          <Tree>
            <TreeRow $level={0}><Plus /><Book /><span>Bibliography</span></TreeRow>
            <TreeRow $level={0}><Plus faded /><Book /><span>Evolution</span></TreeRow>
            <TreeRow $level={1} $selected><Plus faded /><Sheets /><span>Kwerendy</span></TreeRow>
            <TreeRow $level={1}><Plus /><Sheets /><span>Tabele</span></TreeRow>
          </Tree>
          <GridPane>
            <GridHead />
            <GridBody />
            <Bar $v>
              <BarButton aria-label="W górę"><Arrow d="up" c="#888" /></BarButton>
              <Thumb />
              <BarButton aria-label="W dół"><Arrow d="down" c="#888" /></BarButton>
            </Bar>
            <Bar>
              <Thumb />
              <BarButton aria-label="W prawo"><Arrow d="right" c="#888" /></BarButton>
            </Bar>
          </GridPane>
        </Browser>
        <Splitter />

        <Editor>
          <EditorMain>
            <RulerRow>
              <TabKind aria-label="Rodzaj tabulatora"><svg width="8" height="7"><path d="M1 0v5.500h7" stroke="#000" strokeWidth="2.500" fill="none" /></svg></TabKind>
              <Ruler>
                <RulerMargin $w={94}>·</RulerMargin>
                <RulerScale>
                  {"6  ·  ı  · "}
                  <Indent>
                    <svg width="18" height="22" viewBox="0 0 18 22">
                      <text x="9" y="15" textAnchor="middle" fontFamily="Roboto" fontSize="13">17</text>
                      <path d="M9 11l7 7v3H2v-3z" fill="#d0d0d0" stroke="#333" />
                    </svg>
                  </Indent>
                </RulerScale>
                <RulerMargin $w={34}>·  ı</RulerMargin>
              </Ruler>
            </RulerRow>
            <DocRow>
              <VRuler>
                <VMargin><svg width="21" height="50"><path d="M8 6.500h9M11 17.500h2M10 28.500h4M11 39.500h2" stroke="#111" /></svg></VMargin>
                <VScale><VRulerMarks /></VScale>
              </VRuler>
              <Backdrop />
              <Page>
                <PageBody>
                  <Figure />
                  <Paragraph><ins>Poparł stronę Chrzciciela Bartek, <em>zwan</em> Brzytewka,</ins></Paragraph>
                </PageBody>
              </Page>
            </DocRow>
          </EditorMain>
          <Bar $v>
            <BarButton aria-label="Przewiń w górę"><Arrow d="up" s={9} /></BarButton>
            <Track $size={8} />
            <Thumb $size="28px" />
            <Track />
            <BarButton aria-label="Przewiń w dół"><Arrow s={9} /></BarButton>
            <BarButton aria-label="Poprzednia strona"><Arrow d="up2" s={9} /></BarButton>
            <BarButton aria-label="Nawigacja"><svg width="10" height="10"><circle cx="5" cy="5" r="4" fill="#8a86f0" stroke="#4a46b0" /></svg></BarButton>
            <BarButton aria-label="Następna strona"><Arrow d="down2" s={9} /></BarButton>
          </Bar>
        </Editor>
        <Bar>
          <BarButton aria-label="Przewiń w lewo"><Arrow d="left" c="#777" /></BarButton>
          <Thumb $size="86%" />
          <Track />
          <BarButton aria-label="Przewiń w prawo"><Arrow d="right" s={9} /></BarButton>
          <Track $size={16} />
        </Bar>
      </Frame>

      <StatusBar>
        <StatusCell $w={248}>Strona  1 / 2</StatusCell>
        <StatusCell $w={259}>Domyślnie</StatusCell>
        <StatusCell $w={38} $pad={5}>96%</StatusCell>
        <StatusCell $w={40} />
        <StatusCell $w={31} $pad={3}>STD</StatusCell>
        <StatusCell $w={28} $pad={1}>HYP</StatusCell>
        <StatusCell $w={12} />
        <StatusCell $w={19} />
        <StatusCell />
      </StatusBar>

      <Dialog role="dialog" aria-labelledby="dlg-title">
        <DialogTitle>
          {icons.dialogDoc}
          <h2 id="dlg-title">Akceptuj albo odrzuć zmiany</h2>
          <DialogClose aria-label="Zamknij okno"><svg width="20" height="20"><path d="M2 2l16 16M18 2L2 18" stroke="#111" strokeWidth="2" /></svg></DialogClose>
        </DialogTitle>
        <DialogBody>
          <Tabs role="tablist">
            <Tab role="tab" aria-selected $active>Lista</Tab>
            <Tab role="tab" aria-selected={false}>Filtr</Tab>
          </Tabs>
          <TabPanel>
            <List>
              <ListView>
                <Changes>
                  <colgroup>
                    <col style={{ width: "206px" }} /><col style={{ width: "147px" }} /><col style={{ width: "148px" }} /><col />
                  </colgroup>
                  <thead><tr><th>Akcja</th><th>Autor</th><th>Data</th><th>Komentarz</th></tr></thead>
                  <tbody>
                    {changes.map(([kind, date, note], i) => (
                      <ChangeRow key={date} $selected={i === 3}>
                        <td>{kind}</td><td>nieznany</td><td>{date}</td><td>{note}</td>
                      </ChangeRow>
                    ))}
                  </tbody>
                </Changes>
              </ListView>
              <Bar>
                <BarButton aria-label="Lista w lewo"><Arrow d="left" c="#777" /></BarButton>
                <Thumb $size="69%" />
                <Track />
                <BarButton aria-label="Lista w prawo"><Arrow d="right" s={9} /></BarButton>
              </Bar>
            </List>
            <Actions>
              <ActionPair>
                <Action><u>A</u>kceptuj</Action>
                <Action><u>O</u>drzuć</Action>
              </ActionPair>
              <ActionPair>
                <Action>A<u>k</u>ceptuj wszystkie</Action>
                <Action>O<u>d</u>rzuć wszystkie</Action>
              </ActionPair>
            </Actions>
          </TabPanel>
        </DialogBody>
      </Dialog>
    </Window>
  );
}
